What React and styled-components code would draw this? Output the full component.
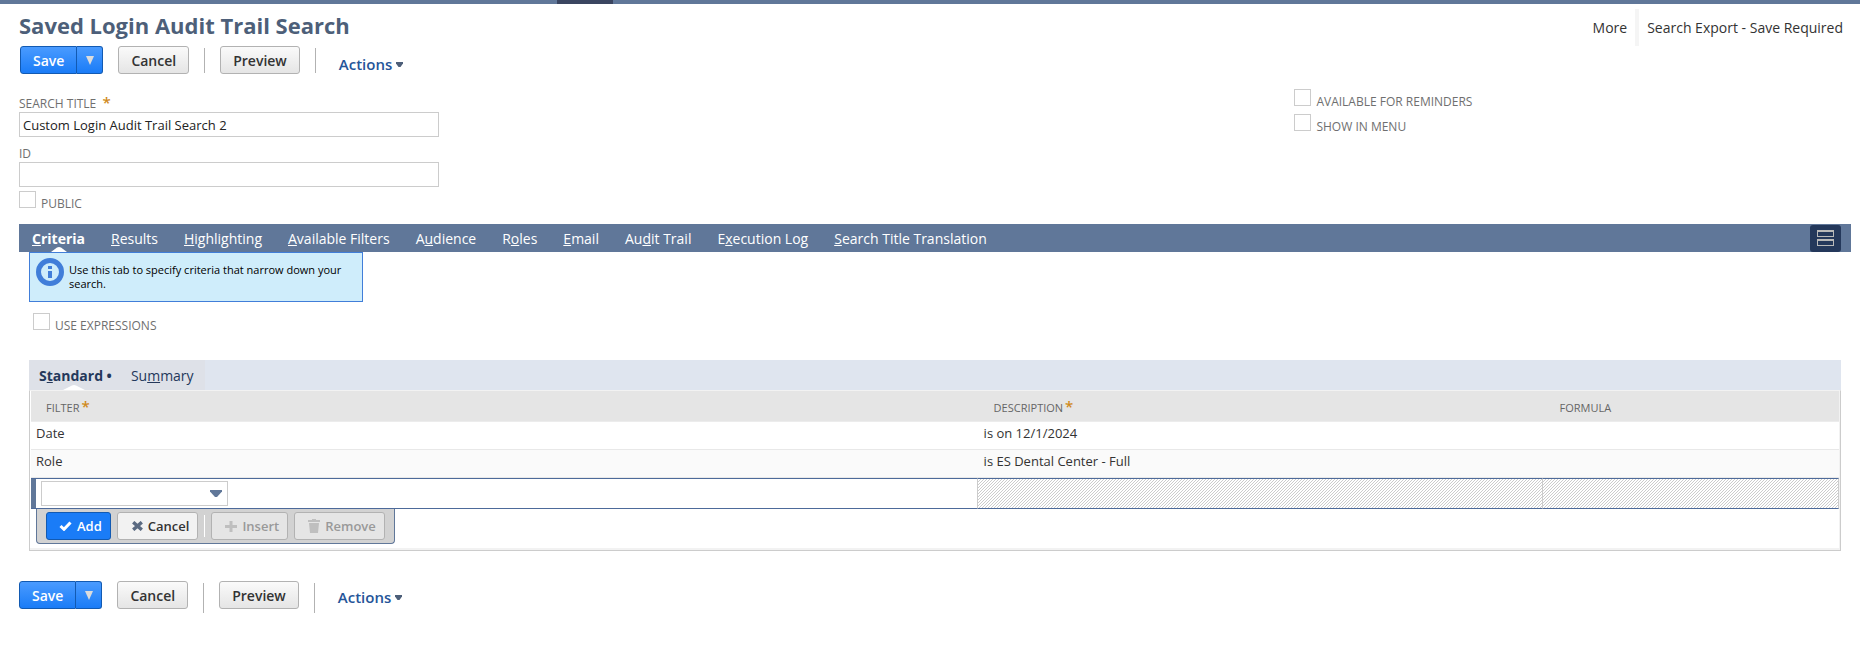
import React, { useState } from "react";
import styled, { createGlobalStyle, css } from "styled-components";

const GlobalStyle = createGlobalStyle`
  * {
    box-sizing: border-box;
  }

  body {
    margin: 0;
    background: #fff;
    color: #333;
    font-family: "Open Sans", "Noto Sans", sans-serif;
    font-size: 13px;
  }

  button, input, select {
    font-family: inherit;
    margin: 0;
  }
`;

const TopBar = styled.div`
  height: 4px;
  padding-left: 557px;
  background: #607799;
`;

const TopBarCurrent = styled.div`
  width: 56px;
  height: 4px;
  background: #3a4560;
`;

const Page = styled.main`
  padding: 5px 9px 20px 19px;
`;

const Header = styled.header`
  display: flex;
  justify-content: space-between;
  height: 37px;
`;

const Title = styled.h1`
  margin: 0;
  color: #4d5f79;
  font-size: 22px;
  line-height: 33px;
`;

const HeaderLinks = styled.nav`
  display: flex;
  padding-right: 8px;
`;

const HeaderLink = styled.a`
  padding: 0 8px;
  color: #333;
  font-size: 14px;
  line-height: 38px;
  text-decoration: none;

  & + & {
    border-left: 4px solid #f5f5f5;
    padding-right: 0;
  }
`;

const Bar = styled.div`
  display: flex;
  align-items: flex-start;
  padding-left: ${({ $bottom }) => ($bottom ? "0" : "1px")};
`;

const Button = styled.button`
  height: 28px;
  padding: 1px 12px 0;
  border: 1px solid #b2b2b2;
  border-radius: 3px;
  background: linear-gradient(#fafafa, #e5e5e5);
  color: #333;
  font-size: 14px;
  font-weight: 600;
  line-height: 25px;
  cursor: pointer;
`;

const SplitButton = styled.div`
  display: flex;
  margin-right: 15px;
`;

const blue = css`
  border-color: #125ab2;
  background: linear-gradient(#4a9bff, #1a7cf7);
  color: #fff;
`;

const SaveButton = styled(Button)`
  ${blue}
  border-radius: 3px 0 0 3px;
`;

const SaveMenuButton = styled(Button)`
  ${blue}
  display: flex;
  align-items: center;
  border-left: 0;
  border-radius: 0 3px 3px 0;
  padding: 0 8px 0 9px;
`;

const Separator = styled.span`
  width: 1px;
  height: ${({ $bottom }) => ($bottom ? "30px" : "25px")};
  margin: 2px 15px 0;
  background: #b2b2b2;
`;

const ActionsButton = styled.button`
  display: flex;
  align-items: center;
  gap: 4px;
  margin-left: 8px;
  padding: ${({ $bottom }) => ($bottom ? "6px 0 0" : "8px 0 0")};
  border: 0;
  background: none;
  color: #255599;
  font-size: 15px;
  font-weight: 600;
  line-height: 20px;
  cursor: pointer;
`;

const Fields = styled.section`
  display: grid;
  grid-template-columns: 16fr 7fr;
  margin: 15px 0 12px;
`;

const LeftFields = styled.div`
  padding-top: 7px;
`;

const RightFields = styled.div`
  display: flex;
  flex-direction: column;
  gap: 4px;
  padding-left: 1px;
`;

const Field = styled.div`
  display: flex;
  flex-direction: column;
  width: 420px;
  margin-bottom: ${({ $last }) => ($last ? "4px" : "9px")};
`;

const Label = styled.label`
  color: #6f6f6f;
  font-size: 12px;
  line-height: 16px;
`;

const Required = styled.span`
  margin-left: ${({ $gap }) => $gap || 2}px;
  color: #d08a1b;
  font-size: 15px;
  font-weight: 600;
  line-height: 12px;
`;

const TextInput = styled.input`
  height: 25px;
  padding: 0 3px 0;
  border: 1px solid #ccc;
  color: #222;
  font-size: 13px;
`;

const CheckRow = styled.div`
  display: flex;
  height: 21px;
  gap: 5px;

  ${Label} {
    align-self: flex-end;
  }
`;

const CheckBox = styled.input.attrs({ type: "checkbox" })`
  appearance: none;
  width: 17px;
  height: 17px;
  border: 1px solid #ccc;
  background: #fff;

  &:checked {
    background: #607799;
  }
`;

const TabBar = styled.div`
  display: flex;
  align-items: center;
  height: 28px;
  padding-right: 10px;
  background: #607799;
`;

const Tab = styled.button`
  position: relative;
  height: 28px;
  padding: 0 13px;
  border: 0;
  background: none;
  color: #fff;
  font-size: 14px;
  font-weight: ${({ $active }) => ($active ? 700 : 400)};
  white-space: nowrap;
  cursor: pointer;
`;

const SubTabBar = styled.div`
  display: flex;
  background: #dfe5ef;
`;

const SubTab = styled(Tab)`
  height: 30px;
  padding: ${({ $active }) => ($active ? "0 8px 0 10px" : "0 11px")};
  background: #dee1e8;
  color: #24385b;
`;

const TabArrow = styled.svg`
  position: absolute;
  bottom: 0;
  left: 50%;
  margin-left: ${({ width }) => -width / 2}px;
`;

const LayoutButton = styled.button`
  display: flex;
  align-items: center;
  justify-content: center;
  width: 31px;
  height: 27px;
  margin-left: auto;
  padding: 0;
  border: 0;
  border-radius: 3px;
  background: #24385b;
`;

const TabContent = styled.div`
  padding: 0 10px;
`;

const Info = styled.div`
  display: flex;
  gap: 5px;
  width: 334px;
  height: 50px;
  margin-bottom: 11px;
  padding: 5px 6px;
  border: 1px solid #417ed9;
  background: #cfedfb;
  color: #000;
  font-size: 11px;
  line-height: 14px;

  svg {
    flex: none;
  }

  p {
    margin: 5px 0 0;
  }
`;

const Expressions = styled.div`
  margin-bottom: 26px;
  padding-left: 4px;
`;

const Sublist = styled.div`
  padding: 0 1px 6px;
  border: 1px solid #ccc;
  border-top-color: #f2f2f2;
  box-shadow: inset 0 -2px 0 #f2f2f2, inset -1px 0 0 #f2f2f2;
`;

const Table = styled.table`
  width: 100%;
  border-collapse: separate;
  border-spacing: 0;
  table-layout: fixed;
`;

const Th = styled.th`
  width: ${({ $width }) => $width};
  height: 31px;
  padding: 3px 15px 0;
  border-bottom: 1px solid #ececec;
  background: #e5e5e5;
  color: #666;
  font-size: 11px;
  font-weight: 400;
  line-height: 16px;
  text-align: left;

  & + & {
    padding-left: 17px;
  }
`;

const Td = styled.td`
  height: 28px;
  padding: 0 5px 6px;
  border-bottom: 1px solid #e8e8e8;
  background: ${({ $odd }) => ($odd ? "#fafafa" : "#fff")};
  font-size: 13px;
  line-height: 18px;

  & + & {
    padding-left: 7px;
  }
`;

const EditCell = styled.td`
  height: 31px;
  padding: 0 5px;
  border-top: 1px solid #4d6a9a;
  border-bottom: 1px solid #4d6a9a;
  box-shadow: inset 5px 0 0 #607799;
`;

const DisabledCell = styled.td`
  padding: 0;
  border-top: 1px solid #4d6a9a;
  border-bottom: 1px solid #4d6a9a;
  border-left: 1px solid #ccc;
  background: linear-gradient(135deg, #fff 40%, #ccc 40% 60%, #fff 60%) 0 0 / 3px 3px;

  &:last-child {
    border-right: 1px solid #ccc;
  }
`;

const SelectBox = styled.div`
  position: relative;
  width: 187px;
  height: 25px;
  margin-left: 5px;

  svg {
    position: absolute;
    top: 9px;
    right: 6px;
    pointer-events: none;
  }
`;

const Select = styled.select`
  appearance: none;
  display: block;
  width: 100%;
  height: 25px;
  padding: 0 22px 0 4px;
  border: 1px solid #ccc;
  border-radius: 0;
  background: #fff;
  font-size: 13px;
`;

const RowActions = styled.div`
  display: flex;
  width: max-content;
  height: 35px;
  margin-left: 5px;
  padding: 3px 9px 0;
  border: 1px solid #607799;
  border-top: 0;
  border-radius: 0 0 4px 4px;
  background: #d2d2d2;
`;

const RowButton = styled.button`
  display: flex;
  align-items: center;
  gap: 5px;
  height: 28px;
  margin-right: ${({ $gap }) => $gap || 0}px;
  padding: 0 8px 0 14px;
  border: 1px solid #b2b2b2;
  border-radius: 3px;
  background: #f2f2f2;
  color: #333;
  font-size: 13px;
  font-weight: 600;

  ${({ $primary }) =>
    $primary &&
    css`
      padding-left: 12px;
      border-color: #125ab2;
      background: #1a7cf7;
      color: #fff;
    `}

  &:disabled {
    padding-left: 13px;
    background: #e5e5e5;
    color: #999;
  }
`;

const RowSeparator = styled.span`
  width: 1px;
  height: 22px;
  margin: 3px 6px 0;
  background: #fff;
`;

const BottomBar = styled.footer`
  padding-top: 30px;
`;

// text before the access key, the key itself, text after it
const tabs = [
  ["", "C", "riteria"],
  ["", "R", "esults"],
  ["", "H", "ighlighting"],
  ["", "A", "vailable Filters"],
  ["A", "u", "dience"],
  ["R", "o", "les"],
  ["", "E", "mail"],
  ["Au", "d", "it Trail"],
  ["E", "x", "ecution Log"],
  ["", "S", "earch Title Translation"],
];

const rows = [
  { filter: "Date", description: "is on 12/1/2024" },
  { filter: "Role", description: "is ES Dental Center - Full" },
];

function Toolbar({ bottom }) {
  return (
    <Bar $bottom={bottom}>
      <SplitButton>
        <SaveButton>Save</SaveButton>
        <SaveMenuButton aria-label="More save options">
          <svg width="8" height="9" viewBox="0 0 8 9">
            <path d="M0 0h8L4 9z" fill="#dcdcdc" />
          </svg>
        </SaveMenuButton>
      </SplitButton>
      <Button>Cancel</Button>
      <Separator $bottom={bottom} />
      <Button>Preview</Button>
      <Separator $bottom={bottom} />
      <ActionsButton $bottom={bottom}>
        Actions
        <svg width="7" height="5" viewBox="0 0 7 5">
          <path d="M0 0h7v1.5L4.5 5h-2L0 1.5z" fill="#4d5f79" />
        </svg>
      </ActionsButton>
    </Bar>
  );
}

function Check({ id, children }) {
  return (
    <CheckRow>
      <CheckBox id={id} />
      <Label htmlFor={id}>{children}</Label>
    </CheckRow>
  );
}

function App() {
  const [active, setActive] = useState(0);
  const [title, setTitle] = useState("Custom Login Audit Trail Search 2");

  return (
    <>
      <GlobalStyle />
      <TopBar>
        <TopBarCurrent />
      </TopBar>
      <Page>
        <Header>
          <Title>Saved Login Audit Trail Search</Title>
          <HeaderLinks>
            <HeaderLink href="#more">More</HeaderLink>
            <HeaderLink href="#export">Search Export - Save Required</HeaderLink>
          </HeaderLinks>
        </Header>
        <Toolbar />

        <Fields>
          <LeftFields>
            <Field>
              <Label htmlFor="title">
                SEARCH TITLE <Required $gap={3}>*</Required>
              </Label>
              <TextInput id="title" value={title} onChange={(e) => setTitle(e.target.value)} />
            </Field>
            <Field $last>
              <Label htmlFor="searchid">ID</Label>
              <TextInput id="searchid" />
            </Field>
            <Check id="public">PUBLIC</Check>
          </LeftFields>
          <RightFields>
            <Check id="reminders">AVAILABLE FOR REMINDERS</Check>
            <Check id="menu">SHOW IN MENU</Check>
          </RightFields>
        </Fields>

        <TabBar role="tablist">
          {tabs.map(([before, key, after], i) => (
            <Tab
              key={after}
              role="tab"
              aria-selected={i === active}
              $active={i === active}
              onClick={() => setActive(i)}
            >
              {before}
              <u>{key}</u>
              {after}
              {i === active && (
                <TabArrow width="16" height="5" viewBox="0 0 16 5">
                  <path d="M0 5L6 0.5Q8 -0.5 10 0.5L16 5z" fill="#fff" />
                </TabArrow>
              )}
            </Tab>
          ))}
          <LayoutButton aria-label="Change layout">
            <svg width="17" height="16" viewBox="0 0 17 16">
              <path d="M0 0h17v7H0zM1 2v4h15V2zM0 9h17v7H0zM1 11v4h15v-4z" fill="#b9b9b9" fillRule="evenodd" />
            </svg>
          </LayoutButton>
        </TabBar>

        <TabContent>
          <Info>
            <svg width="28" height="28" viewBox="0 0 28 28">
              <circle cx="14" cy="14" r="11.5" fill="none" stroke="#417ed9" strokeWidth="5" />
              <path d="M12 8h4v3h-4zM12 13h4v7h-4z" fill="#417ed9" />
            </svg>
            <p>Use this tab to specify criteria that narrow down your search.</p>
          </Info>
          <Expressions>
            <Check id="expressions">USE EXPRESSIONS</Check>
          </Expressions>

          <SubTabBar role="tablist">
            <SubTab role="tab" aria-selected $active>
              S<u>t</u>andard •
              <TabArrow width="22" height="5" viewBox="0 0 22 5">
                <path d="M0 5L9 0.5Q11 -0.5 13 0.5L22 5z" fill="#fff" />
              </TabArrow>
            </SubTab>
            <SubTab role="tab" aria-selected={false}>
              Su<u>m</u>mary
            </SubTab>
          </SubTabBar>
          <Sublist>
            <Table>
              <thead>
                <tr>
                  <Th $width="52.3%">
                    FILTER<Required>*</Required>
                  </Th>
                  <Th $width="31.3%">
                    DESCRIPTION<Required>*</Required>
                  </Th>
                  <Th $width="16.4%">FORMULA</Th>
                </tr>
              </thead>
              <tbody>
                {rows.map((row, i) => (
                  <tr key={row.filter}>
                    <Td $odd={i % 2}>{row.filter}</Td>
                    <Td $odd={i % 2}>{row.description}</Td>
                    <Td $odd={i % 2} />
                  </tr>
                ))}
                <tr>
                  <EditCell>
                    <SelectBox>
                      <Select aria-label="Filter">
                        <option />
                        <option>Date</option>
                        <option>Role</option>
                      </Select>
                      <svg width="12" height="7" viewBox="0 0 12 7">
                        <path d="M0 0h12v1.5L7 7H5L0 1.5z" fill="#607799" />
                      </svg>
                    </SelectBox>
                  </EditCell>
                  <DisabledCell />
                  <DisabledCell />
                </tr>
              </tbody>
            </Table>
            <RowActions>
              <RowButton $primary $gap={6}>
                <svg width="13" height="10" viewBox="0 0 13 10">
                  <path d="M1.5 5l3.5 3.3L11.5 1.5" fill="none" stroke="#fff" strokeWidth="3" />
                </svg>
                Add
              </RowButton>
              <RowButton>
                <svg width="11" height="10" viewBox="0 0 11 10">
                  <path d="M1.2 1.2l8.6 7.6M9.8 1.2L1.2 8.8" stroke="#5b6b82" strokeWidth="3.4" />
                </svg>
                Cancel
              </RowButton>
              <RowSeparator />
              <RowButton disabled $gap={6}>
                <svg width="12" height="11" viewBox="0 0 12 11">
                  <path d="M4.5 0h3v4H12v3H7.5v4h-3V7H0V4h4.5z" fill="#bfbfbf" />
                </svg>
                Insert
              </RowButton>
              <RowButton disabled>
                <svg width="12" height="14" viewBox="0 0 12 14">
                  <path d="M0 1h4V0h4v1h4v2H0zM1 4h10l-1 10H2z" fill="#bfbfbf" />
                </svg>
                Remove
              </RowButton>
            </RowActions>
          </Sublist>
        </TabContent>

        <BottomBar>
          <Toolbar bottom />
        </BottomBar>
      </Page>
    </>
  );
}

export default App;
